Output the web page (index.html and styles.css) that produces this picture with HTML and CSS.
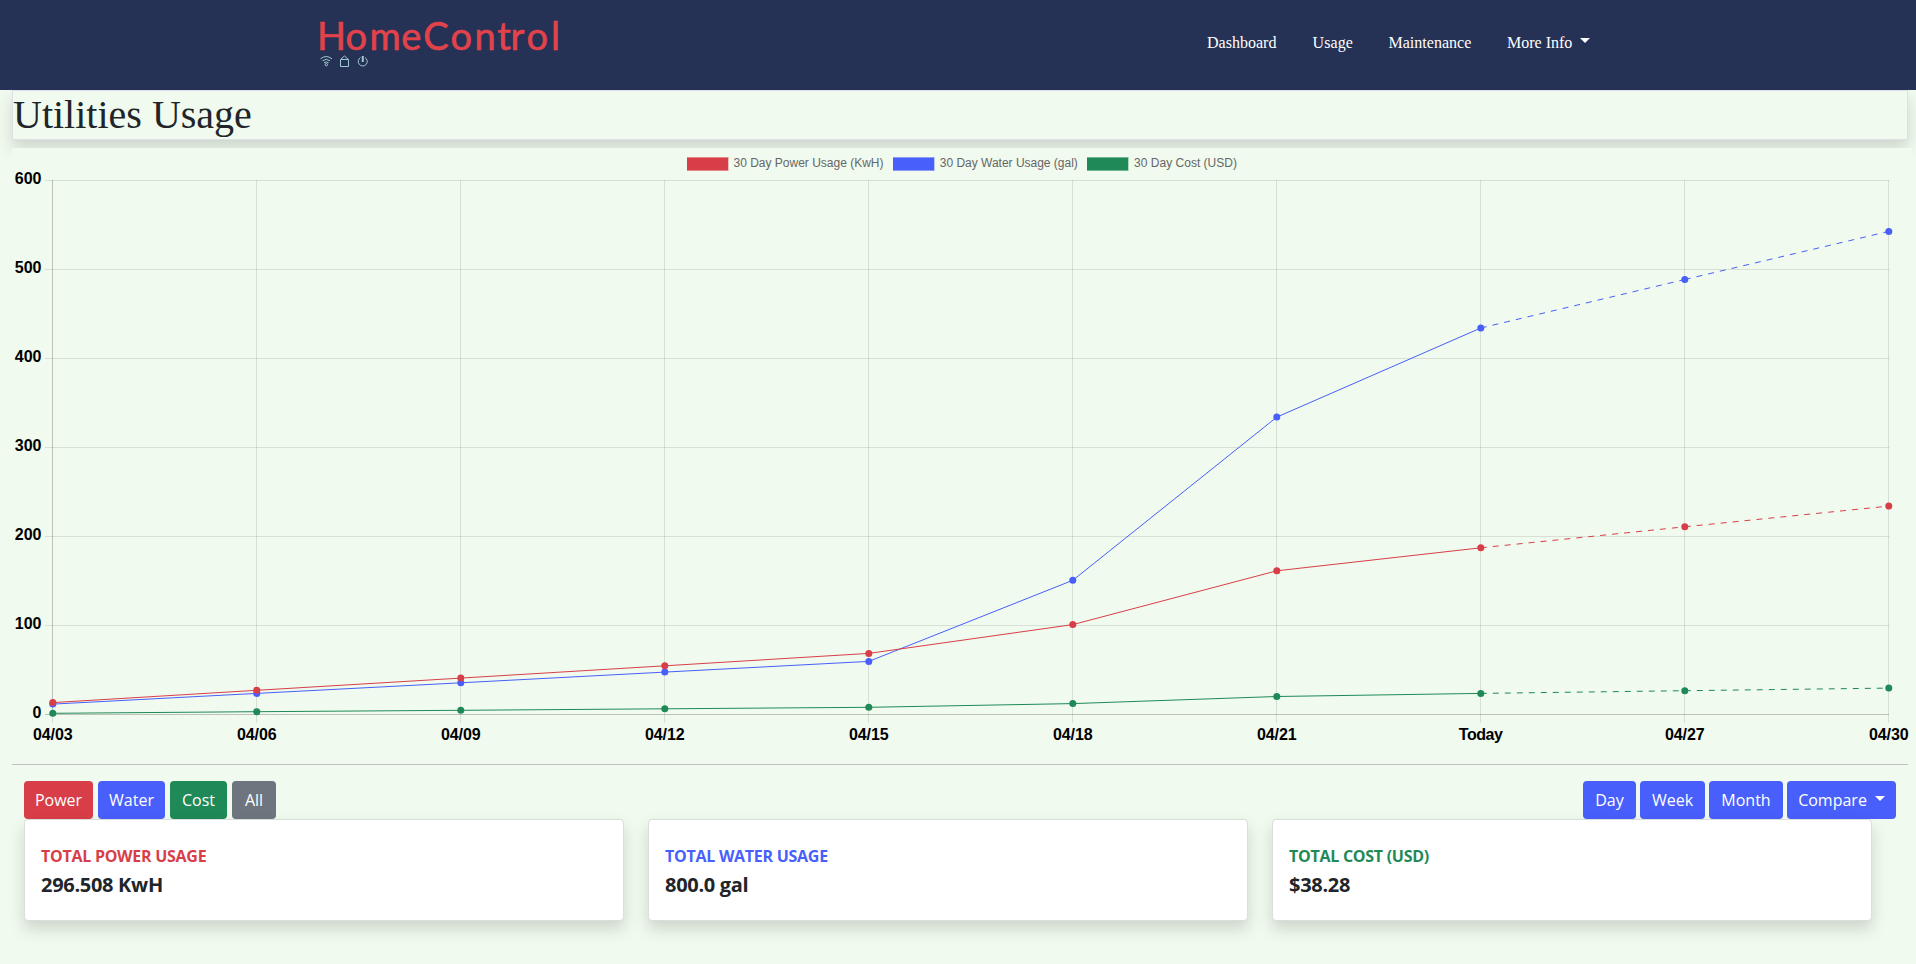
FILE: index.html
```html
<!DOCTYPE html>
<html lang="en">
<head>
<meta charset="utf-8">
<title>HomeControl - Utilities Usage</title>
<link rel="stylesheet" href="styles.css">
</head>
<body>
<nav class="navbar">
  <a class="brand">
    <svg width="250" height="62" viewBox="312 10 250 62">
      <text class="logo" y="50" x="317 345.6 369.5 401.300 423.300 450.6 474.4 497.200 510.500 526.6 551">HomeControl</text>
      <g class="logo-icons">
        <path d="M320.5 58.800q5.500-4.500 11.500 0M322.500 60.800q3.700-3 7.500 0M324 62.800q2.200-1.800 4.500 0"/>
        <circle cx="326.300" cy="64.700" r="1.200"/>
        <path d="M340.500 59.500h8v7h-8zM341 59l3.500-3 3.500 3"/>
        <path d="M360.500 57.600a4.500 4.500 0 1 0 4.500 0"/>
        <path class="power-stem" d="M362.800 56v6"/>
      </g>
    </svg>
  </a>
  <div class="links">
    <a class="l1">Dashboard</a><a class="l2">Usage</a><a class="l3">Maintenance</a><a class="l4">More Info<span class="caret"></span></a>
  </div>
</nav>
<main>
  <header class="title"><h1>Utilities Usage</h1></header>
  <div class="chart"><svg id="chart" width="1900" height="604" viewBox="12 148 1900 604"></svg></div>
  <hr>
  <section class="toolbar">
    <div class="group"><button class="btn red power">Power</button><button class="btn blue water">Water</button><button class="btn green cost">Cost</button><button class="btn gray all">All</button></div>
    <div class="group right"><button class="btn blue day">Day</button><button class="btn blue week">Week</button><button class="btn blue month">Month</button><button class="btn blue compare">Compare<span class="caret"></span></button></div>
  </section>
  <section class="cards">
    <article class="card"><h2 class="t-red">TOTAL POWER USAGE</h2><p>296.508 KwH</p></article>
    <article class="card"><h2 class="t-blue">TOTAL WATER USAGE</h2><p>800.0 gal</p></article>
    <article class="card"><h2 class="t-green">TOTAL COST (USD)</h2><p>$38.28</p></article>
  </section>
</main>
<script src="chart.js"></script>
</body>
</html>
```
FILE: styles.css
```css
* { box-sizing: border-box; }
body { margin: 0; background: #f0faee; color: #212529; font-family: "Open Sans", "Noto Sans", sans-serif; font-size: 16px; line-height: 24px; height: 964px; overflow: hidden; }
.navbar { height: 90px; background: #253255; display: flex; padding: 10px 0 0 312px; }
.brand { width: 895px; }
.brand svg { display: block; }
.logo { font: 38px Lato, sans-serif; fill: #e2434b; stroke: #e2434b; stroke-width: .6px; }
.logo-icons { fill: none; stroke: #9fc9d3; stroke-width: 1px; }
.logo-icons .power-stem { stroke-width: 2px; }
.links { display: flex; padding-top: 21px; color: #fff; font-family: "Liberation Serif", serif; font-size: 16px; white-space: nowrap; }
.l1 { width: 105.500px; letter-spacing: .02px; }
.l2 { width: 76px; letter-spacing: .1px; }
.l3 { width: 118.500px; letter-spacing: .02px; }
.l4 { letter-spacing: 0; }
.caret { display: inline-block; margin-left: 8px; vertical-align: 5px; border: 5px solid transparent; border-top-color: #fff; border-bottom: 0; }
main { padding: 0 8px 0 12px; }
.title { width: 1896px; height: 50px; border: 1px solid #dee0e8; box-shadow: 0 8px 16px rgba(0,0,0,.15); clip-path: inset(0 -12px -50px -12px); }
h1 { margin: 0; padding-top: 4px; font: 400 40px/40px "Liberation Serif", serif; white-space: nowrap; }
.chart { position: relative; margin: 8px -4px 0 0; width: 1900px; height: 604px; background: #f0faee; }
.chart svg { display: block; }
hr { margin: 12px 0 16px; width: 1896px; height: 1px; border: 0; background: #bcc4bd; }
.toolbar { display: flex; justify-content: space-between; padding: 0 12px; width: 1896px; }
.group { display: flex; gap: 5px; }
.right { gap: 4px; }
.btn { height: 38px; border: 0; border-radius: 4px; padding: 0; color: #fff; font: 16px/24px "Open Sans", sans-serif; white-space: nowrap; }
.red { background: #d83e48; }
.blue { background: #485ffc; }
.green { background: #1f8957; }
.gray { background: #6e757e; }
.power { width: 69px; }
.water { width: 67px; }
.cost { width: 57px; }
.all { width: 44px; }
.day { width: 53px; }
.week { width: 65px; }
.month { width: 74px; }
.compare { width: 109px; }
.cards { display: grid; grid-template-columns: repeat(3, 600px); gap: 24px; padding-left: 12px; }
.card { height: 102px; background: #fff; border: 1px solid #d9dedb; border-radius: 4px; padding: 23px 16px; box-shadow: 0 8px 16px rgba(0,0,0,.15); }
.card h2 { margin: 0 0 4px; font-size: 16px; line-height: 26px; font-weight: 700; letter-spacing: -.27px; }
.card p { margin: 0; font-size: 20px; line-height: 24px; font-weight: 700; letter-spacing: -.3px; }
.t-red { color: #d83e48; }
.t-blue { color: #485ffc; }
.t-green { color: #1f8957; }
.grid { stroke: #000; stroke-opacity: .1; }
.axis { stroke: #000; stroke-opacity: .22; }
.tick { font: 700 16px "Liberation Sans", sans-serif; fill: #000; }
.legend { font: 12px "Liberation Sans", sans-serif; fill: #666; }
```
FILE: chart.js
```javascript
const parts = [];
const left = 52.5, bottom = 714.5, stepX = 204, stepY = 89;
const labels = ['04/03', '04/06', '04/09', '04/12', '04/15', '04/18', '04/21', 'Today', '04/27', '04/30'];

for (let i = 0; i <= 6; i++) {
  const y = bottom - i * stepY;
  parts.push(`<path class="${i ? 'grid' : 'axis'}" d="M45 ${y}H1889"/>`);
  parts.push(`<text class="tick" x="41.500" y="${y + 3.5}" text-anchor="end">${i * 100}</text>`);
}
labels.forEach((label, i) => {
  const x = left + i * stepX;
  parts.push(`<path class="${i ? 'grid' : 'axis'}" d="M${x} 180V${i ? 723 : 715}"/>`);
  if (!i) parts.push(`<path class="grid" d="M${x} 715V723"/>`);
  parts.push(`<text class="tick" x="${x + 0.3}" y="740" text-anchor="middle" textLength="${label === 'Today' ? 44 : 39.5}">${label}</text>`);
});

const series = [
  ['#1f8957', [713.3, 711.7, 710.3, 708.8, 707.3, 703.6, 696.5, 693.4, 690.7, 688.1]],
  ['#485ffc', [704.1, 693.4, 682.8, 672.1, 661.4, 580.3, 417.1, 328, 279.5, 231.4]],
  ['#d83e48', [702.6, 690.3, 678.1, 665.8, 653.4, 624.6, 570.8, 547.8, 526.8, 506.1]]
];
for (const [color, ys] of series) {
  const pts = ys.map((y, i) => [left + 0.3 + i * stepX, y]);
  parts.push(`<polyline fill="none" stroke="${color}" points="${pts.slice(0, 8).join(' ')}"/>`);
  for (let i = 7; i < 9; i++) {
    parts.push(`<polyline fill="none" stroke="${color}" stroke-dasharray="6 6" points="${pts[i]} ${pts[i + 1]}"/>`);
  }
  for (const [x, y] of pts) parts.push(`<circle cx="${x}" cy="${y}" r="3.500" fill="${color}"/>`);
}

const legend = [
  [687, '#d83e48', '30 Day Power Usage (KwH)', 733.5, 150],
  [893, '#485ffc', '30 Day Water Usage (gal)', 939.8, 138],
  [1087, '#1f8957', '30 Day Cost (USD)', 1134, 103]
];
for (const [x, color, label, tx, len] of legend) {
  parts.push(`<rect x="${x}" y="157" width="41.500" height="14" fill="${color}" fill-opacity=".6"/>`);
  parts.push(`<rect x="${x}" y="158" width="41" height="12" fill="${color}"/>`);
  parts.push(`<text class="legend" x="${tx}" y="167" textLength="${len}">${label}</text>`);
}
document.getElementById('chart').innerHTML = parts.join('');
```
